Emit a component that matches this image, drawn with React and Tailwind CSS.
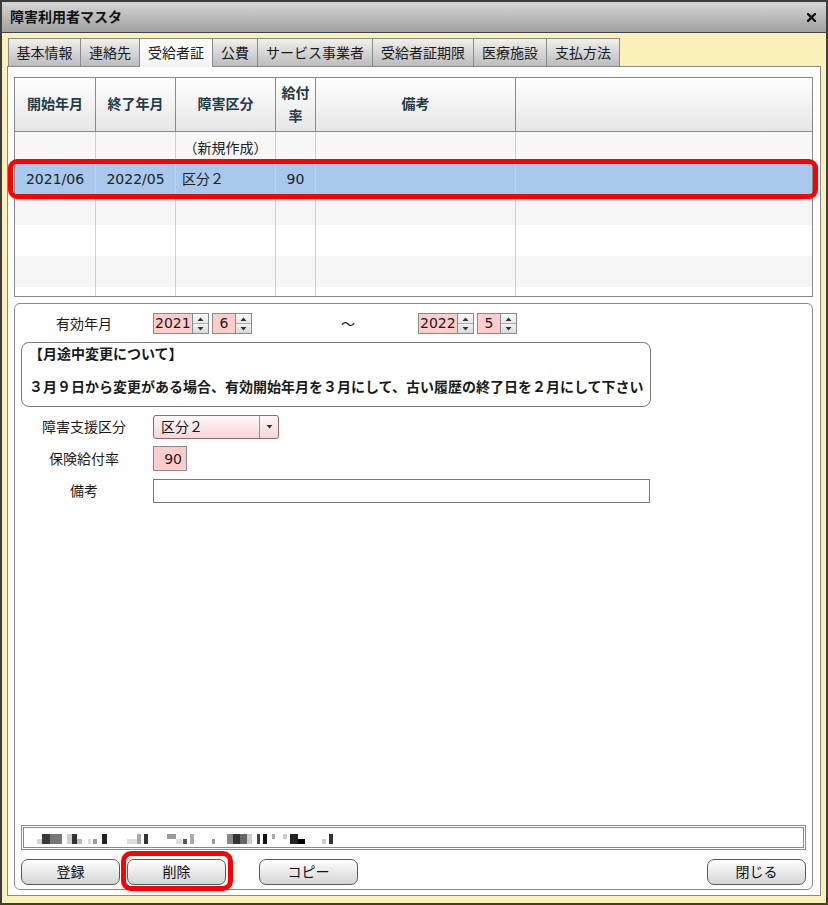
import React from "react";

const FONT = "font-['DejaVu_Sans','Noto_Sans_CJK_JP',sans-serif]";

const tabs = [
  { label: "基本情報", w: "w-[73px] border-l" },
  { label: "連絡先", w: "w-[59px]" },
  { label: "受給者証", w: "w-[73px]", active: true },
  { label: "公費", w: "w-[45px]" },
  { label: "サービス事業者", w: "w-[115px]" },
  { label: "受給者証期限", w: "w-[101px]" },
  { label: "医療施設", w: "w-[73px]" },
  { label: "支払方法", w: "w-[73px]" },
];

const COLS = ["w-[81px]", "w-[80px]", "w-[100px]", "w-[40px]", "w-[200px]", "flex-1"];

const rows = [
  { bg: "bg-[#f7f7f7]", cells: ["", "", "（新規作成）", "", "", ""] },
  { bg: "bg-[#a9c8ee]", cells: ["2021/06", "2022/05", "区分２", "90", "", ""] },
  { bg: "bg-[#f5f5f5]", cells: ["", "", "", "", "", ""] },
  { bg: "bg-white", cells: ["", "", "", "", "", ""] },
  { bg: "bg-[#f5f5f5]", cells: ["", "", "", "", "", ""] },
  { bg: "bg-white", cells: ["", "", "", "", "", ""] },
];

// mosaic blocks of the blurred status text
const mosaic = [
  "ml-[13px] w-[5px] h-[5px] self-end bg-[#d4d4d4]",
  "w-[8px] h-[10px] bg-[#3a3a3a]",
  "w-[12px] h-[10px] bg-[#777]",
  "ml-[5px] w-[5px] h-[10px] bg-[#cfcfcf]",
  "w-[5px] h-[10px] bg-[#333]",
  "w-[5px] h-[5px] self-end bg-[#bbb]",
  "ml-[6px] w-[3px] h-[5px] self-end bg-[#ddd]",
  "ml-[2px] w-[4px] h-[5px] self-end bg-[#999]",
  "ml-[5px] w-[5px] h-[10px] bg-[#222]",
  "ml-[20px] w-[10px] h-[5px] self-end bg-[#ddd]",
  "w-[4px] h-[10px] bg-[#aaa]",
  "ml-[3px] w-[4px] h-[10px] bg-[#333]",
  "ml-[19px] w-[9px] h-[5px] self-start bg-[#999]",
  "w-[6px] h-[5px] self-end bg-[#ddd]",
  "ml-[1px] w-[4px] h-[5px] self-end bg-[#555]",
  "ml-[3px] w-[4px] h-[10px] bg-[#aaa]",
  "ml-[18px] w-[3px] h-[5px] self-end bg-[#999]",
  "ml-[12px] w-[6px] h-[10px] bg-[#888]",
  "w-[7px] h-[10px] bg-[#333]",
  "w-[7px] h-[10px] bg-[#666]",
  "w-[5px] h-[10px] bg-[#ccc]",
  "ml-[5px] w-[3px] h-[10px] bg-[#444]",
  "ml-[3px] w-[4px] h-[10px] bg-[#111]",
  "ml-[5px] w-[3px] h-[5px] self-start bg-[#aaa]",
  "ml-[8px] w-[4px] h-[5px] self-start bg-[#ccc]",
  "ml-[3px] w-[8px] h-[10px] bg-[#222]",
  "w-[7px] h-[5px] self-end bg-black",
  "ml-[17px] w-[4px] h-[5px] self-end bg-[#ccc]",
  "ml-[3px] w-[4px] h-[10px] bg-[#333]",
];

const Arrow = ({ up }) => (
  <svg width="7" height="4" viewBox="0 0 7 4">
    <path d={up ? "M0.5 4 L3.5 0.5 L6.5 4 Z" : "M0.5 0 L3.5 3.5 L6.5 0 Z"} fill="#333" />
  </svg>
);

const Spinner = () => (
  <div className="w-[16px] h-full border border-l-0 border-[#8a8a8a] flex flex-col">
    <div className="flex-1 flex items-center justify-center bg-linear-to-b from-[#fafafa] to-[#e6e6e6] border-b border-[#b0b0b0]">
      <Arrow up />
    </div>
    <div className="flex-1 flex items-center justify-center bg-linear-to-b from-[#f2f2f2] to-[#dadada]">
      <Arrow />
    </div>
  </div>
);

const YearMonth = ({ year, month }) => (
  <div className="flex h-[21px] items-stretch">
    <div className="w-[40px] bg-[#ffcccc] border border-[#8a8a8a] text-[14px] leading-[19px] pl-px">{year}</div>
    <Spinner />
    <div className="ml-[3px] w-[24px] bg-[#ffcccc] border border-[#8a8a8a] text-[14px] leading-[19px] text-center">{month}</div>
    <Spinner />
  </div>
);

const Btn = ({ children, className = "" }) => (
  <button className={`h-[26px] w-[99px] rounded-[7px] border border-[#5a5a5a] bg-linear-to-b from-white to-[#d4d4d4] text-[14px] leading-none text-[#111] ${className}`}>
    {children}
  </button>
);

export default function App() {
  return (
    <div className={`w-[828px] h-[905px] flex flex-col bg-[#faf0ba] border-2 border-[#3c3c3c] overflow-hidden text-[#1a1a1a] ${FONT}`}>
      {/* Title bar */}
      <div className="h-[31px] shrink-0 flex items-center justify-between pl-[8px] pr-[10px] bg-linear-to-b from-[#d6d6d6] to-[#a0a0a0] border-b border-[#444]">
        <span className="text-[14px] font-bold leading-none text-[#111]">障害利用者マスタ</span>
        <svg width="9" height="9" viewBox="0 0 9 9">
          <path d="M1 1 L8 8 M8 1 L1 8" stroke="#111" strokeWidth="2.4" strokeLinecap="square" />
        </svg>
      </div>

      {/* Body */}
      <div className="flex-1 flex flex-col px-[5px] pt-[5px] pb-[7px]">
        {/* Tabs */}
        <div className="flex h-[29px] ml-px -mb-px relative z-10 shrink-0">
          {tabs.map((t) => (
            <div
              key={t.label}
              className={`${t.w} h-full flex items-center justify-center border-t border-r border-[#8a8a8a] text-[14px] leading-none ${
                t.active ? "bg-linear-to-b from-white to-[#f4f4f4]" : "border-b bg-linear-to-b from-[#f0f0f0] to-[#bcbcbc]"
              }`}
            >
              {t.label}
            </div>
          ))}
        </div>

        {/* Panel */}
        <div className="flex-1 flex flex-col bg-white border border-[#8a8a8a] pt-[10px] pl-[6px] pr-[7px] pb-[5px]">
          {/* Grid */}
          <div className="relative shrink-0">
            <div className="h-[220px] flex flex-col border border-[#8a8a8a] overflow-hidden">
              <div className="h-[54px] shrink-0 flex border-b border-[#8a8a8a] bg-linear-to-b from-white to-[#e6e6e6]">
                {["開始年月", "終了年月", "障害区分", "給付\n率", "備考", ""].map((h, i) => (
                  <div
                    key={i}
                    className={`${COLS[i]} h-full flex items-center justify-center text-center whitespace-pre-line font-bold text-[14px] leading-[23px] text-[#1e3b48] ${i < 5 ? "border-r border-[#8a8a8a]" : ""}`}
                  >
                    {h}
                  </div>
                ))}
              </div>
              {rows.map((r, ri) => (
                <div key={ri} className={`h-[31px] shrink-0 flex ${r.bg}`}>
                  {r.cells.map((c, i) => (
                    <div
                      key={i}
                      className={`${COLS[i]} h-full flex items-center text-[14px] leading-none text-[#222] ${
                        i === 2 && ri > 0 ? "justify-start pl-[6px]" : "justify-center"
                      } ${i < 5 ? "border-r border-[#cfcfcf]" : ""}`}
                    >
                      {c}
                    </div>
                  ))}
                </div>
              ))}
            </div>
            {/* selected row highlight */}
            <div className="absolute left-[-6px] top-[82px] w-[810px] h-[40px] border-[5px] border-[#ff0000] rounded-[9px] pointer-events-none" />
          </div>

          {/* Form */}
          <div className="mt-[6px] flex-1 flex flex-col border border-[#8a8a8a] rounded-[6px] pt-[9px] pb-[4px]">
            <div className="flex items-center h-[21px]">
              <div className="w-[138px] text-center text-[14px] leading-none">有効年月</div>
              <YearMonth year="2021" month="6" />
              <span className="ml-[89px] text-[14px] leading-none">～</span>
              <div className="ml-[63px]">
                <YearMonth year="2022" month="5" />
              </div>
            </div>

            <div className="ml-[6px] mt-[8px] w-[630px] h-[65px] border border-[#7a7a7a] rounded-[8px] pl-[7px] pt-px font-bold text-[14px] leading-[20px]">
              <div>【月途中変更について】</div>
              <div className="mt-[13px]">３月９日から変更がある場合、有効開始年月を３月にして、古い履歴の終了日を２月にして下さい</div>
            </div>

            <div className="flex items-center mt-[8px] h-[24px]">
              <div className="w-[138px] text-center text-[14px] leading-none">障害支援区分</div>
              <div className="w-[126px] h-full flex rounded-[3px] border border-[#9a6666] bg-linear-to-b from-[#fff8f8] to-[#f6d6d6]">
                <div className="flex-1 flex items-center pl-[7px] text-[14px] leading-none">区分２</div>
                <div className="w-[19px] h-full flex items-center justify-center border-l border-[#b08a8a]">
                  <Arrow />
                </div>
              </div>
            </div>

            <div className="flex items-center mt-[7px] h-[25px]">
              <div className="w-[138px] text-center text-[14px] leading-none">保険給付率</div>
              <div className="w-[34px] h-full flex items-center justify-end pr-[4px] bg-[#ffcccc] border border-[#8a8a8a] text-[14px] leading-none">90</div>
            </div>

            <div className="flex items-center mt-[8px] h-[24px]">
              <div className="w-[138px] text-center text-[14px] leading-none">備考</div>
              <div className="w-[497px] h-full bg-white border border-[#7a7a7a]" />
            </div>

            <div className="flex-1" />

            {/* status bar */}
            <div className="mx-[6px] h-[25px] border-[3px] border-double border-[#8a8a8a] flex items-center">
              <div className="flex h-[10px] mt-[3px]">
                {mosaic.map((m, i) => (
                  <div key={i} className={`shrink-0 ${m}`} />
                ))}
              </div>
            </div>

            {/* buttons */}
            <div className="mt-[9px] mx-[6px] flex items-center">
              <Btn>登録</Btn>
              <div className="relative ml-[7px]">
                <Btn>削除</Btn>
                <div className="absolute left-[-6px] top-[-8px] w-[112px] h-[40px] border-[5px] border-[#ff0000] rounded-[10px] pointer-events-none" />
              </div>
              <Btn className="ml-[33px]">コピー</Btn>
              <div className="flex-1" />
              <Btn>閉じる</Btn>
            </div>
          </div>
        </div>
      </div>
    </div>
  );
}
